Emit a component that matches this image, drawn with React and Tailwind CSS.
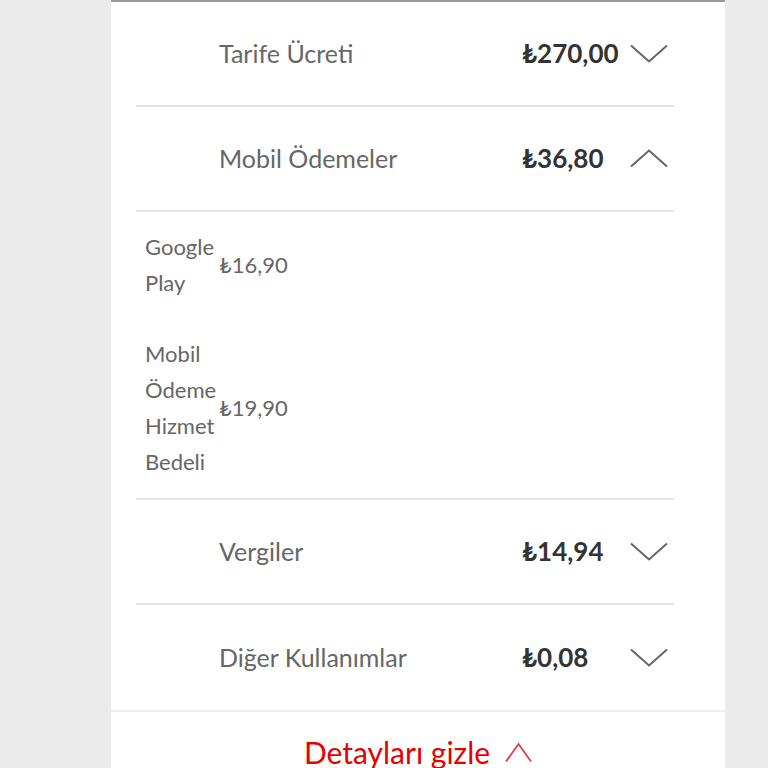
function Chevron({up, className}) {
  return (
    <svg width="38" height="19" viewBox="0 0 38 19" className={className}>
      <path
        d={up ? "M1 17.5 L19 1.5 L37 17.5" : "M1 1.5 L19 17.5 L37 1.5"}
        fill="none"
        stroke="currentColor"
        strokeWidth="2"
      />
    </svg>
  );
}

const rowsTop = [
  {label: "Tarife Ücreti", amount: "₺270,00", open: false},
  {label: "Mobil Ödemeler", amount: "₺36,80", open: true},
];

const rowsBottom = [
  {label: "Vergiler", amount: "₺14,94", open: false},
  {label: "Diğer Kullanımlar", amount: "₺0,08", open: false},
];

const subItems = [
  {label: "Google Play", amount: "₺16,90"},
  {label: "Mobil Ödeme Hizmet Bedeli", amount: "₺19,90"},
];

function Row({item, last}) {
  return (
    <div className={`flex h-[105px] items-center pl-[83px] pr-[6px] ${last ? "" : "border-b-2 border-[#e3e3e3]"}`}>
      <span className="flex-1 text-[25px] text-[#666666]">{item.label}</span>
      <span className="w-[108px] text-[26px] font-bold text-[#333333]">{item.amount}</span>
      <Chevron up={item.open} className="text-[#666666]"/>
    </div>
  );
}

export default function App() {
  return (
    <div className="min-h-[768px] bg-[#ebebeb] font-['Lato',sans-serif]">
      <div className="ml-[111px] w-[614px] bg-white border-t-2 border-[#9b9b9b]">
        <div className="ml-[25px] mr-[51px]">
          {rowsTop.map((item) => (
            <Row key={item.label} item={item}/>
          ))}

          {/* expanded: Mobil Ödemeler */}
          <div className="flex flex-col gap-[35px] pl-[9px] pt-[17px] pb-[18px] border-b-2 border-[#e3e3e3]">
            {subItems.map((sub) => (
              <div key={sub.label} className="flex items-center text-[22px] leading-[36px] text-[#666666]">
                <span className="w-[74px]">{sub.label}</span>
                <span>{sub.amount}</span>
              </div>
            ))}
          </div>

          {rowsBottom.map((item, i) => (
            <Row key={item.label} item={item} last={i === rowsBottom.length - 1}/>
          ))}
        </div>

        <div className="border-t-2 border-[#efefef] pt-[20px] flex items-center justify-center gap-[15px]">
          <span className="text-[30px] leading-[40px] text-[#e60000]">Detayları gizle</span>
          <svg width="27" height="21" viewBox="0 0 27 21" className="text-[#e8394a]">
            <path d="M1 19.5 L13.5 2 L26 19.5" fill="none" stroke="currentColor" strokeWidth="1.8"/>
          </svg>
        </div>
      </div>
    </div>
  );
}
